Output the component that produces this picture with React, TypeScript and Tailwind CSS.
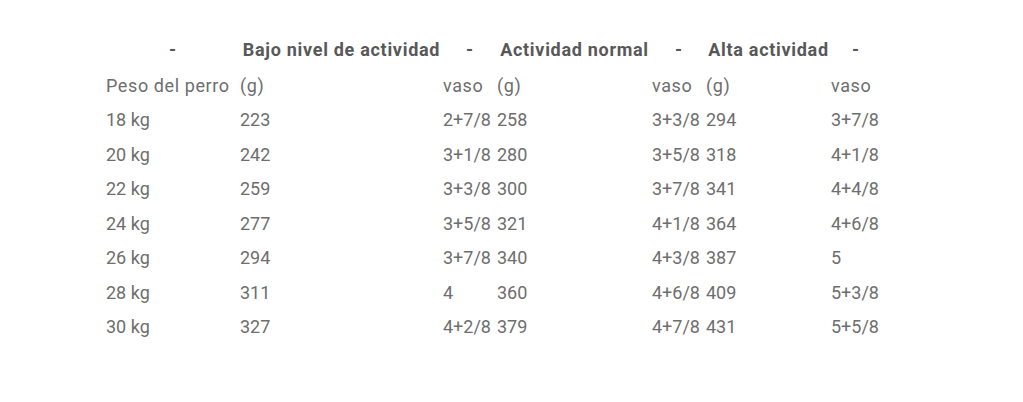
const rows = [
  ["18 kg", "223", "2+7/8", "258", "3+3/8", "294", "3+7/8"],
  ["20 kg", "242", "3+1/8", "280", "3+5/8", "318", "4+1/8"],
  ["22 kg", "259", "3+3/8", "300", "3+7/8", "341", "4+4/8"],
  ["24 kg", "277", "3+5/8", "321", "4+1/8", "364", "4+6/8"],
  ["26 kg", "294", "3+7/8", "340", "4+3/8", "387", "5"],
  ["28 kg", "311", "4", "360", "4+6/8", "409", "5+3/8"],
  ["30 kg", "327", "4+2/8", "379", "4+7/8", "431", "5+5/8"],
];

const widths = ["w-[134px]", "w-[203px]", "w-[54px]", "w-[155px]", "w-[54px]", "w-[125px]", "w-[50px]"];

export default function App() {
  return (
    <div className="w-[1023px] h-[402px] bg-white pt-[31px] pl-[106px] font-['Roboto',sans-serif] text-[18px] text-[#6e6e6e]">
      <table className="table-fixed border-collapse">
        <colgroup>
          {widths.map((w, i) => (
            <col key={i} className={w} />
          ))}
        </colgroup>
        <thead>
          <tr className="h-[37px] text-[#585858] font-bold tracking-[0.7px]">
            <th className="p-0 text-center">-</th>
            <th className="p-0 text-center whitespace-nowrap">Bajo nivel de actividad</th>
            <th className="p-0 text-center">-</th>
            <th className="p-0 text-center whitespace-nowrap">Actividad normal</th>
            <th className="p-0 text-center">-</th>
            <th className="p-0 text-center whitespace-nowrap">Alta actividad</th>
            <th className="p-0 text-center">-</th>
          </tr>
        </thead>
        <tbody>
          <tr className="h-[34.5px] tracking-[0.6px]">
            <td className="p-0 whitespace-nowrap">Peso del perro</td>
            <td className="p-0">(g)</td>
            <td className="p-0">vaso</td>
            <td className="p-0">(g)</td>
            <td className="p-0">vaso</td>
            <td className="p-0">(g)</td>
            <td className="p-0">vaso</td>
          </tr>
          {rows.map((r) => (
            <tr key={r[0]} className="h-[34.5px]">
              {r.map((c, i) => (
                <td key={i} className="p-0 whitespace-nowrap">
                  {c}
                </td>
              ))}
            </tr>
          ))}
        </tbody>
      </table>
    </div>
  );
}
